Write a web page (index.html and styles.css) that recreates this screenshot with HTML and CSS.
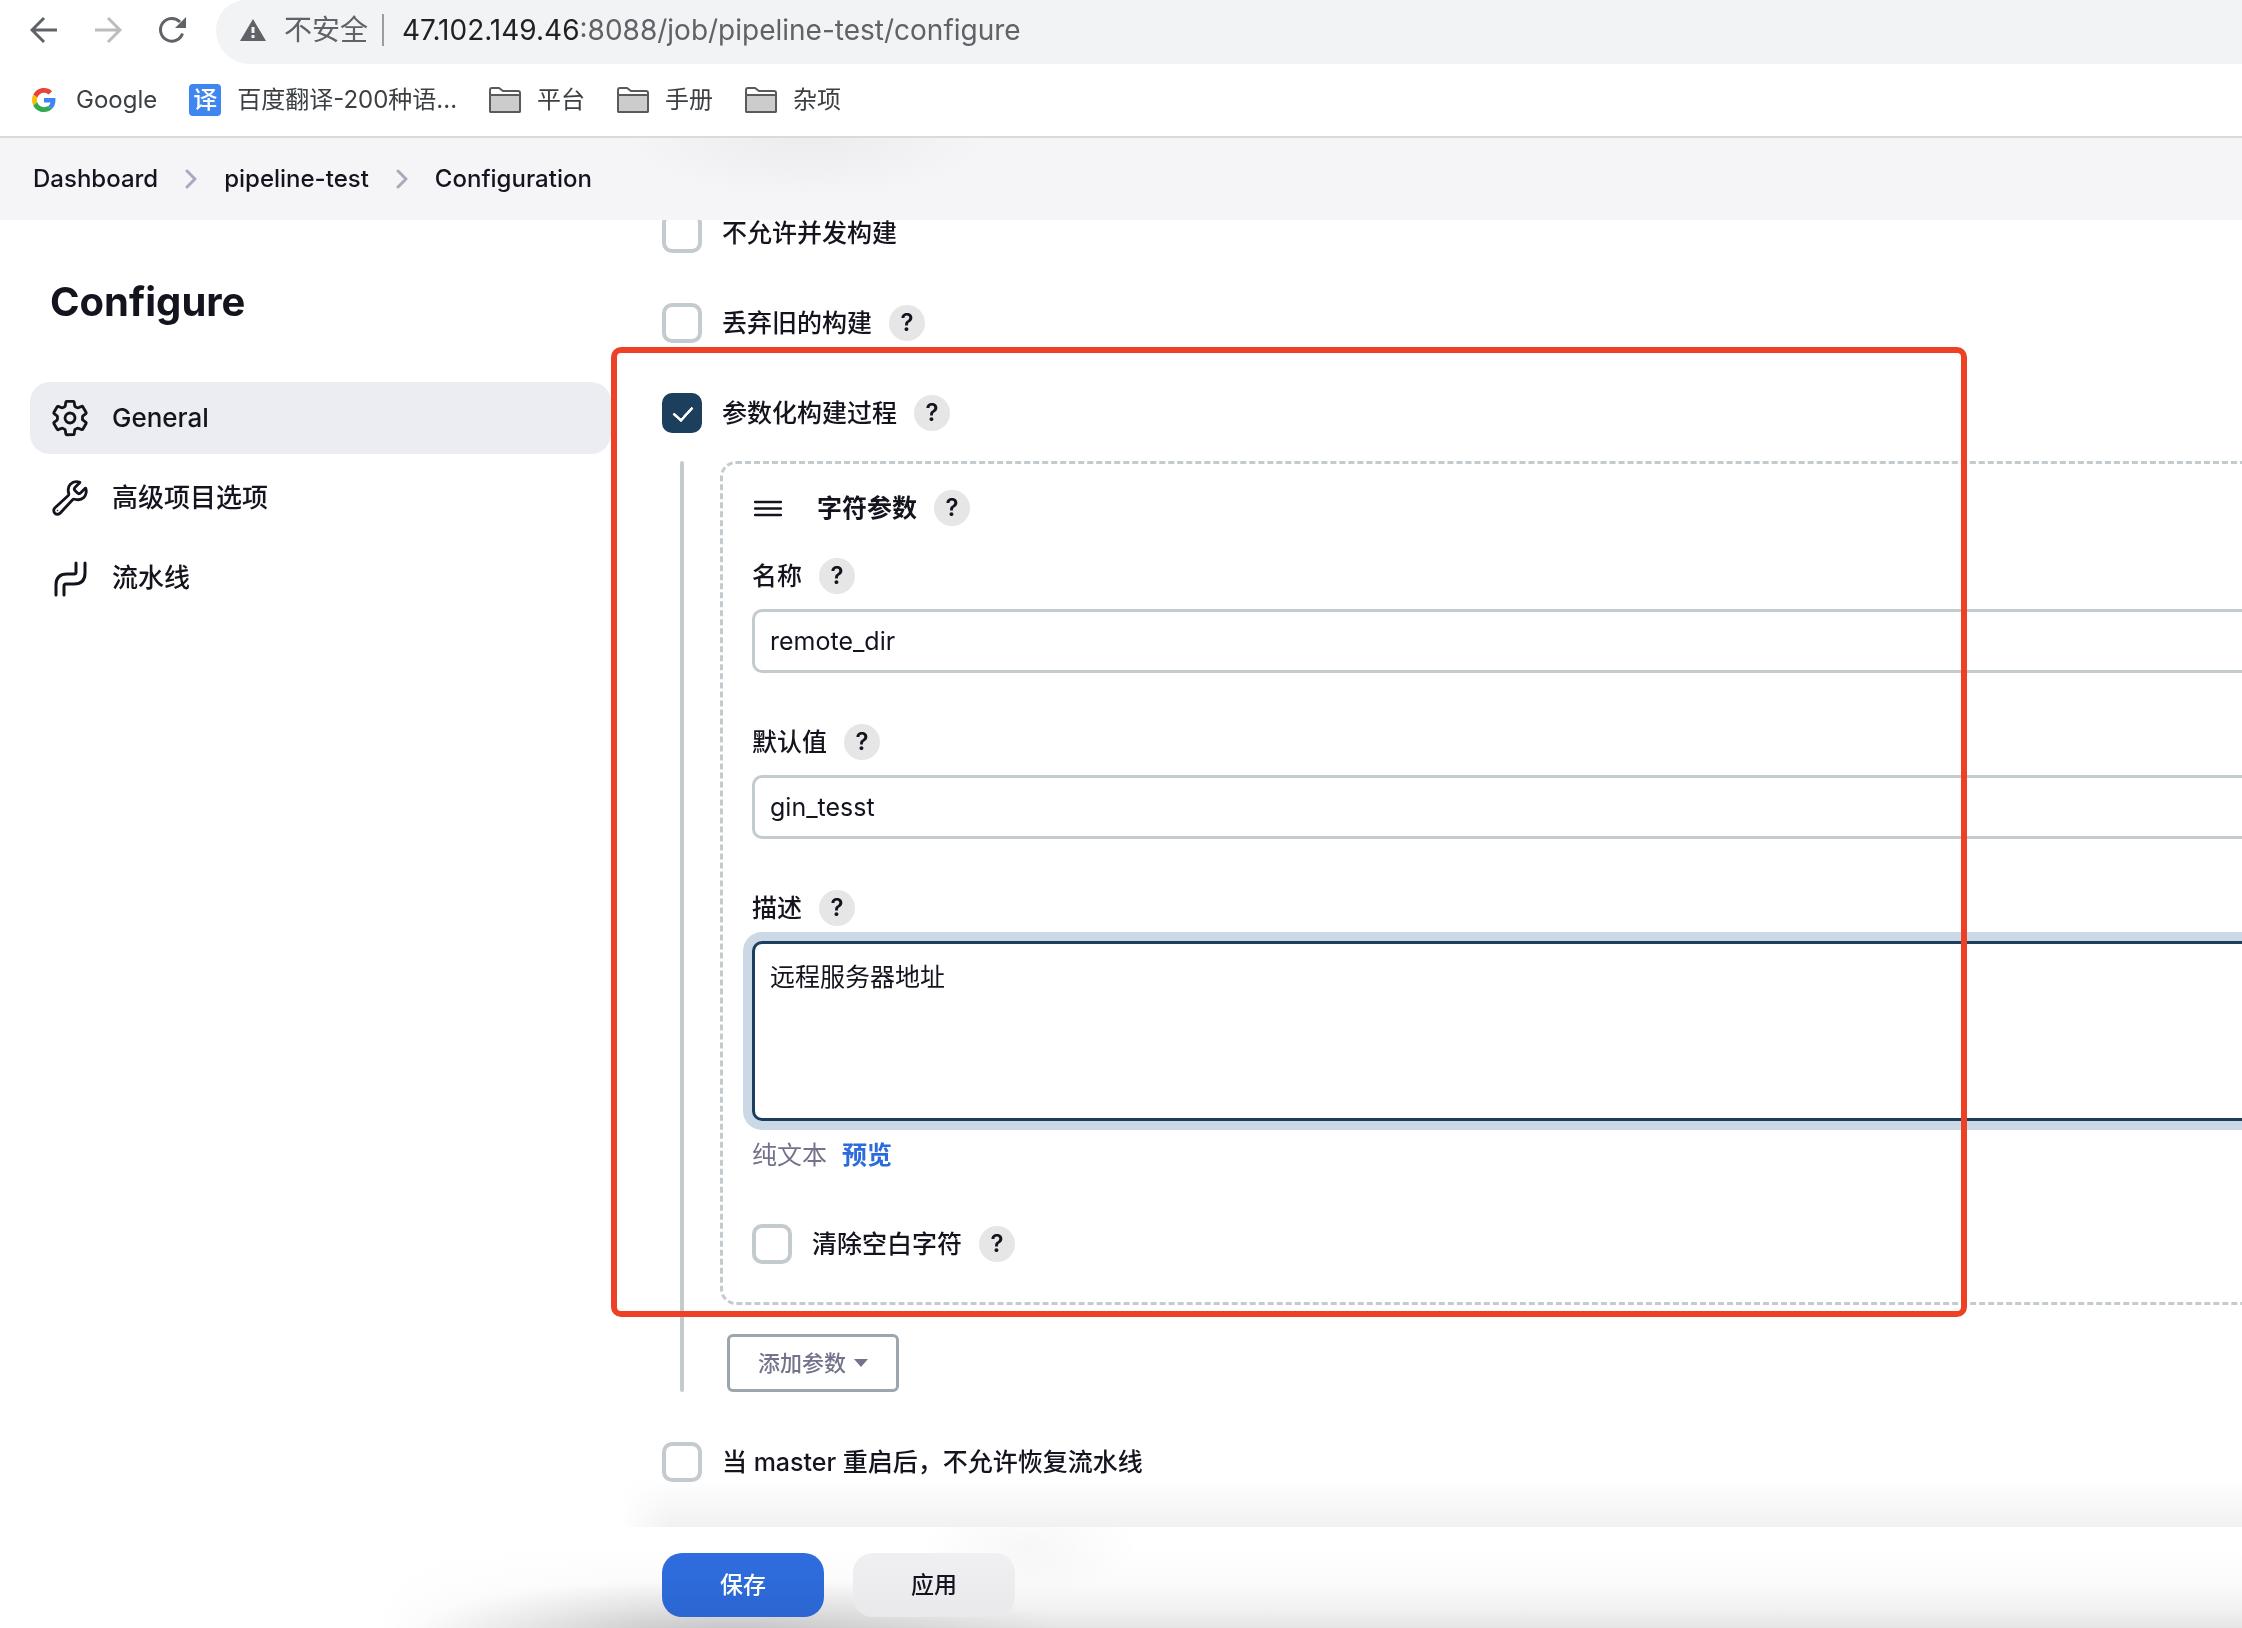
FILE: index.html
```html
<!DOCTYPE html>
<html lang="zh-CN">
<head>
<meta charset="utf-8">
<title>pipeline-test Config [Jenkins]</title>
<link rel="stylesheet" href="styles.css">
</head>
<body>
<header class="browser">
  <div class="toolbar">
    <div class="nav-buttons">
      <button class="icon-button" type="button" aria-label="后退"><svg width="28" height="28" viewBox="0 0 28 28" fill="none" stroke="#5f6368" stroke-width="3"><path d="M27 14H3M14 2L2 14l12 12"/></svg></button>
      <button class="icon-button" type="button" aria-label="前进"><svg width="28" height="28" viewBox="0 0 28 28" fill="none" stroke="#bbbcbe" stroke-width="3"><path d="M1 14h24M14 2l12 12-12 12"/></svg></button>
      <button class="icon-button" type="button" aria-label="重新加载"><svg width="28" height="28" viewBox="0 0 28 28"><path d="M24.500 17.500A11.300 11.300 0 1 1 22 6" fill="none" stroke="#5f6368" stroke-width="3"/><path d="M28 1v11H17z" fill="#5f6368"/></svg></button>
    </div>
    <div class="omnibox">
      <svg width="26" height="22" viewBox="0 0 26 22"><path d="M13 0l13 22H0z" fill="#5f6368"/><path d="M11.500 8h3v6h-3zM11.500 16h3v3h-3z" fill="#f1f3f4"/></svg>
      <span class="insecure">不安全</span>
      <span class="url"><b>47.102.149.46</b>:8088/job/pipeline-test/configure</span>
    </div>
  </div>
  <nav class="bookmarks" aria-label="书签">
    <a class="bookmark google" href="#"><svg width="24" height="24" viewBox="0 0 48 48"><path fill="#ea4335" d="M24 9.500c3.540 0 6.710 1.220 9.210 3.600l6.850-6.850C35.900 2.380 30.470 0 24 0 14.620 0 6.510 5.380 2.560 13.220l7.980 6.190C12.430 13.720 17.740 9.500 24 9.500z"/><path fill="#4285f4" d="M46.980 24.550c0-1.570-.15-3.090-.38-4.550H24v9.020h12.940c-.58 2.960-2.260 5.480-4.780 7.180l7.730 6c4.510-4.180 7.090-10.360 7.090-17.650z"/><path fill="#fbbc05" d="M10.530 28.590c-.48-1.450-.76-2.990-.76-4.590s.27-3.140.76-4.590l-7.980-6.190C.92 16.460 0 20.120 0 24c0 3.880.92 7.540 2.560 10.780l7.970-6.190z"/><path fill="#34a853" d="M24 48c6.480 0 11.930-2.130 15.890-5.810l-7.730-6c-2.150 1.450-4.920 2.300-8.160 2.300-6.260 0-11.570-4.220-13.470-9.910l-7.980 6.190C6.510 42.620 14.620 48 24 48z"/></svg>Google</a>
    <a class="bookmark" href="#"><span class="yi">译</span>百度翻译-200种语...</a>
    <a class="bookmark" href="#"><svg width="32" height="26" viewBox="0 0 32 26"><path d="M1 24V3q0-2 2-2h7l4 3h15q2 0 2 2v18q0 1-1 1H2q-1 0-1-1z" fill="#fff" stroke="#5a5a5a" stroke-width="2"/><path d="M1 8h30v15q0 2-1 2H2q-1 0-1-2z" fill="#ccc" stroke="#5a5a5a" stroke-width="2"/></svg>平台</a>
    <a class="bookmark" href="#"><svg width="32" height="26" viewBox="0 0 32 26"><path d="M1 24V3q0-2 2-2h7l4 3h15q2 0 2 2v18q0 1-1 1H2q-1 0-1-1z" fill="#fff" stroke="#5a5a5a" stroke-width="2"/><path d="M1 8h30v15q0 2-1 2H2q-1 0-1-2z" fill="#ccc" stroke="#5a5a5a" stroke-width="2"/></svg>手册</a>
    <a class="bookmark" href="#"><svg width="32" height="26" viewBox="0 0 32 26"><path d="M1 24V3q0-2 2-2h7l4 3h15q2 0 2 2v18q0 1-1 1H2q-1 0-1-1z" fill="#fff" stroke="#5a5a5a" stroke-width="2"/><path d="M1 8h30v15q0 2-1 2H2q-1 0-1-2z" fill="#ccc" stroke="#5a5a5a" stroke-width="2"/></svg>杂项</a>
  </nav>
</header>

<nav class="breadcrumbs" aria-label="breadcrumb">
  <a href="#">Dashboard</a>
  <svg width="12" height="20" viewBox="0 0 12 20"><path d="M2 2l8 8-8 8"/></svg>
  <a href="#">pipeline-test</a>
  <svg width="12" height="20" viewBox="0 0 12 20"><path d="M2 2l8 8-8 8"/></svg>
  <a href="#">Configuration</a>
</nav>

<div class="page">
  <aside class="sidebar">
    <h1>Configure</h1>
    <nav class="tasks">
      <a class="task active" href="#"><svg width="40" height="40" viewBox="0 0 512 512"><path d="M262.290 192.310a64 64 0 1 0 57.400 57.400 64.130 64.130 0 0 0-57.400-57.400zM416.390 256a154.340 154.340 0 0 1-1.530 20.790l45.210 35.460a10.810 10.810 0 0 1 2.450 13.750l-42.770 74a10.810 10.810 0 0 1-13.140 4.590l-44.900-18.080a16.110 16.110 0 0 0-15.170 1.750A164.480 164.480 0 0 1 325 400.800a15.940 15.940 0 0 0-8.820 12.140l-6.730 47.890a11.080 11.080 0 0 1-10.680 9.170h-85.540a11.110 11.110 0 0 1-10.690-8.870l-6.720-47.820a16.070 16.070 0 0 0-9-12.220 155.300 155.300 0 0 1-21.460-12.570 16 16 0 0 0-15.110-1.710l-44.890 18.070a10.810 10.810 0 0 1-13.140-4.580l-42.770-74a10.800 10.800 0 0 1 2.450-13.750l38.210-30a16.050 16.050 0 0 0 6-14.080c-.36-4.170-.58-8.330-.58-12.500s.21-8.270.58-12.350a16 16 0 0 0-6.070-13.940l-38.190-30A10.810 10.810 0 0 1 49.480 186l42.770-74a10.810 10.810 0 0 1 13.140-4.590l44.900 18.080a16.110 16.110 0 0 0 15.170-1.750A164.480 164.480 0 0 1 187 111.200a15.940 15.940 0 0 0 8.820-12.140l6.730-47.890A11.080 11.080 0 0 1 213.230 42h85.540a11.110 11.110 0 0 1 10.690 8.870l6.720 47.820a16.070 16.070 0 0 0 9 12.220 155.300 155.300 0 0 1 21.460 12.570 16 16 0 0 0 15.110 1.710l44.890-18.070a10.810 10.810 0 0 1 13.140 4.580l42.770 74a10.800 10.800 0 0 1-2.450 13.750l-38.210 30a16.050 16.050 0 0 0-6.050 14.080c.33 4.140.55 8.300.55 12.470z"/></svg>General</a>
      <a class="task" href="#"><svg width="40" height="40" viewBox="0 0 512 512"><path d="M393.870 190a32.100 32.100 0 0 1-45.250 0l-26.570-26.570a32.090 32.090 0 0 1 0-45.260L382.190 58a1 1 0 0 0-.3-1.640c-38.820-16.640-89.150-8.160-121.110 23.570-30.580 30.350-32.320 76-21.120 115.840a31.930 31.930 0 0 1-9.060 32.080L64 380a48.170 48.170 0 1 0 68 68l153.860-167a31.930 31.930 0 0 1 31.600-9.130c39.540 10.590 84.540 8.600 114.720-21.190 32.490-32 39.500-88.560 23.750-120.930a1 1 0 0 0-1.600-.26z"/><circle cx="96" cy="416" r="10" fill="#14141f" stroke="none"/></svg>高级项目选项</a>
      <a class="task" href="#"><svg width="40" height="40" viewBox="0 0 40 40"><path class="thin" d="M6 37V27q0-11 11-11h7q2 0 2-2V5M14 37V28q0-2 2-2h8q11 0 11-11V5"/></svg>流水线</a>
    </nav>
  </aside>

  <main class="content">
    <form class="config">
      <div class="option first"><input type="checkbox" id="concurrent"><label for="concurrent">不允许并发构建</label></div>
      <div class="option"><input type="checkbox" id="discard"><label for="discard">丢弃旧的构建</label><button class="help" type="button">?</button></div>
      <div class="option"><input type="checkbox" id="params" checked><label for="params">参数化构建过程</label><button class="help" type="button">?</button></div>
      <div class="nested">
        <section class="parameter">
          <div class="parameter-head">
            <svg width="28" height="18" viewBox="0 0 28 18" stroke="#14141f" stroke-width="2.500" stroke-linecap="round"><path d="M1 3h26M1 9.500h26M1 16h26"/></svg>
            <strong>字符参数</strong><button class="help" type="button">?</button>
          </div>
          <div class="field">
            <div class="field-label"><label for="name">名称</label><button class="help" type="button">?</button></div>
            <input class="text" type="text" id="name" value="remote_dir">
          </div>
          <div class="field">
            <div class="field-label"><label for="default">默认值</label><button class="help" type="button">?</button></div>
            <input class="text" type="text" id="default" value="gin_tesst">
          </div>
          <div class="field">
            <div class="field-label"><label for="description">描述</label><button class="help" type="button">?</button></div>
            <textarea class="text focused" id="description">远程服务器地址</textarea>
            <div class="hint">纯文本<a href="#">预览</a></div>
          </div>
          <div class="option trim"><input type="checkbox" id="trim"><label for="trim">清除空白字符</label><button class="help" type="button">?</button></div>
        </section>
        <button class="add" type="button">添加参数<svg width="14" height="8" viewBox="0 0 14 8"><path d="M0 0h14L7 8z" fill="#73738c"/></svg></button>
      </div>
      <div class="option"><input type="checkbox" id="resume"><label for="resume">当 master 重启后，不允许恢复流水线</label></div>
    </form>
    <div class="highlight"></div>
  </main>
</div>

<footer class="actions">
  <button class="save" type="button">保存</button>
  <button class="apply" type="button">应用</button>
</footer>
</body>
</html>
```

FILE: styles.css
```css
* { box-sizing: border-box; }

body {
  margin: 0;
  height: 100vh;
  display: flex;
  flex-direction: column;
  overflow: hidden;
  background: #fff;
  color: #14141f;
  font: 25px/36px Inter, "Noto Sans CJK SC", sans-serif;
}

a { color: inherit; text-decoration: none; }
button, input, textarea { font: inherit; color: inherit; margin: 0; }
svg { flex: none; }

/* Browser bars */
.browser { flex: none; border-bottom: 2px solid #d9dadb; }
.toolbar { display: flex; height: 64px; }
.nav-buttons { display: flex; align-items: center; gap: 36px; padding: 0 30px 4px 30px; }
.icon-button { display: flex; border: 0; padding: 0; background: none; }
.omnibox {
  flex: 1;
  display: flex;
  align-items: center;
  padding: 0 24px 4px;
  background: #f1f3f4;
  border-radius: 30px 0 0 34px;
  font-size: 28px;
  color: #5f6368;
}
.insecure { margin-left: 18px; padding-right: 14px; border-right: 2px solid #9a9da1; line-height: 32px; }
.url { margin-left: 18px; }
.url b { font-weight: 400; color: #202124; }

.bookmarks { display: flex; align-items: center; gap: 32px; height: 72px; padding: 0 32px; font-size: 24px; color: #3c4043; }
.bookmark { display: flex; align-items: center; gap: 16px; }
.google { gap: 20px; }
.yi {
  width: 32px;
  height: 32px;
  border-radius: 4px;
  background: #4086f0;
  color: #fff;
  font-weight: 500;
  line-height: 32px;
  text-align: center;
}

.breadcrumbs {
  flex: none;
  display: flex;
  align-items: center;
  gap: 27px;
  height: 82px;
  padding: 0 33px;
  background: radial-gradient(ellipse 180px 60px at 806px 0, #ececee, #f5f5f8);
  font-size: 24px;
  font-weight: 500;
}
.breadcrumbs svg { fill: none; stroke: #a9a9bd; stroke-width: 3; stroke-linecap: round; stroke-linejoin: round; }

/* Page */
.page { flex: 1; min-height: 0; display: flex; }
.sidebar { flex: none; width: 611px; padding: 56px 0 0 30px; }
h1 { margin: 0 0 54px 20px; font-size: 40px; line-height: 52px; font-weight: 700; }
.tasks { display: flex; flex-direction: column; gap: 8px; }
.task { display: flex; align-items: center; gap: 22px; height: 72px; padding: 0 20px; border-radius: 20px; font-weight: 500; font-size: 26px; }
.task svg { fill: none; stroke: #14141f; stroke-width: 36; stroke-linecap: round; stroke-linejoin: round; }
.task .thin { stroke-width: 3; }
.active { background: #ecedf3; }

.content { position: relative; flex: 1; min-width: 0; overflow: hidden; }
.config { padding-left: 51px; }
.option { display: flex; align-items: center; height: 40px; margin-bottom: 50px; font-weight: 500; }
.first { margin-top: -7px; }
.option input {
  appearance: none;
  flex: none;
  width: 40px;
  height: 40px;
  margin-right: 20px;
  border: 4px solid #c3cbce;
  border-radius: 10px;
  background: #fff;
}
.option input:checked {
  border-color: #1b3f5d;
  background: #1b3f5d;
  position: relative;
}
.option input:checked::after {
  content: "";
  position: absolute;
  left: 11px;
  top: 5px;
  width: 9px;
  height: 16px;
  border: solid #fff;
  border-width: 0 3px 3px 0;
  border-radius: 1px;
  transform: rotate(42deg);
}
.help {
  flex: none;
  width: 36px;
  height: 36px;
  margin-left: 17px;
  padding: 0;
  border: 0;
  border-radius: 50%;
  background: #e6e6e6;
  font-size: 24px;
  line-height: 36px;
  font-weight: 600;
}

.nested { position: relative; margin: -22px 0 50px; padding-left: 58px; }
.nested::before {
  content: "";
  position: absolute;
  left: 18px;
  top: 0;
  bottom: 0;
  width: 4px;
  border-radius: 2px;
  background: #c3cbce;
}
.parameter { margin-right: -20px; padding: 26px 0 38px 29px; border: 3px dashed #c3cbce; border-radius: 16px; }
.parameter-head { display: flex; align-items: center; padding-left: 2px; margin-bottom: 32px; }
.parameter-head strong { margin-left: 35px; font-weight: 600; }
.field { margin-bottom: 51px; }
.field-label { display: flex; align-items: center; margin-bottom: 15px; font-weight: 500; }
.text {
  display: block;
  width: 100%;
  height: 64px;
  padding: 0 15px;
  border: 3px solid #c3cbce;
  border-radius: 10px;
  background: #fff;
  outline: 0;
}
textarea.text { height: 180px; padding: 15px; resize: none; }
.focused { border-color: #1b3f5d; box-shadow: 0 0 0 9px #cbd9e7; }
.hint { display: flex; gap: 15px; margin-top: 16px; color: #73738c; }
.hint a { color: #2b6bdd; font-weight: 600; }
.trim { margin-bottom: 0; }
.add {
  display: flex;
  align-items: center;
  gap: 8px;
  height: 58px;
  margin: 29px 0 0 7px;
  padding: 0 28px;
  border: 3px solid #9ba6ad;
  border-radius: 6px;
  background: #fff;
  color: #73738c;
  font-size: 22px;
  font-weight: 500;
}

/* Annotation frame drawn over the form */
.highlight {
  position: absolute;
  left: 0;
  top: 127px;
  width: 1356px;
  height: 970px;
  border: 6px solid #ee4024;
  border-radius: 10px;
  pointer-events: none;
}

.actions {
  position: relative;
  flex: none;
  display: flex;
  gap: 29px;
  padding: 26px 0 11px 662px;
  background:
    radial-gradient(ellipse 320px 50px at 740px 100%, rgba(0, 0, 0, .13), rgba(0, 0, 0, 0)),
    radial-gradient(ellipse 110px 50px at 1030px 20px, rgba(0, 0, 0, .03), rgba(0, 0, 0, 0)),
    linear-gradient(90deg, #fff 380px, rgba(255, 255, 255, 0) 640px),
    linear-gradient(#fff 20%, #fbfbfb 55%, #f1f1f1 82%, #e5e5e5);
}
/* Shade above the sticky bar */
.actions::before {
  content: "";
  position: absolute;
  left: 620px;
  right: 0;
  bottom: 100%;
  height: 48px;
  background: linear-gradient(90deg, #fff, rgba(255, 255, 255, 0) 50px), linear-gradient(#fff, #f1f1f1);
  mix-blend-mode: multiply;
}
.actions button { width: 162px; height: 64px; border: 0; border-radius: 20px; font-size: 23px; font-weight: 500; }
.save { background: linear-gradient(#2f6de0, #2b66d1); color: #fff; }
.apply { background: linear-gradient(#f0f0f3, #e9e9eb); }
```
